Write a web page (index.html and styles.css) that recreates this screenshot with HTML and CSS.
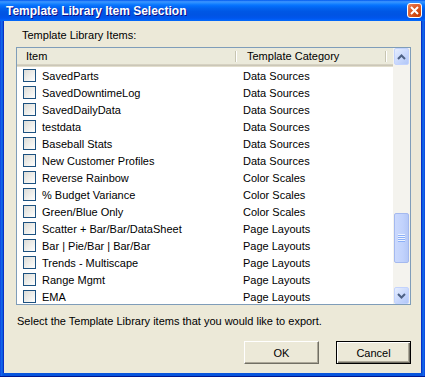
FILE: index.html
```html
<!doctype html>
<html lang="en">
<head>
    <meta charset="utf-8">
    <title>Template Library Item Selection</title>
    <link rel="stylesheet" href="styles.css">
</head>
<body>

    <!--dialog window-->
    <div class="window">
        <div class="titlebar">
            <span class="title">Template Library Item Selection</span>
            <span class="close">
                <svg width="9" height="9" viewBox="0 0 9 9"><path d="M1 1 L8 8 M8 1 L1 8" stroke="#fff" stroke-width="2" fill="none"/></svg>
            </span>
        </div>
        <div class="frame">
            <div class="body">
                <div class="label">Template Library Items:</div>

                <!--list view-->
                <div class="list">
                    <div class="list-main">
                        <div class="header">
                            <div class="col col-item">Item</div>
                            <div class="col col-cat">Template Category</div>
                            <div class="col col-rest"></div>
                        </div>
                        <div class="rows">
                            <div class="row"><span class="check"></span><span class="name">SavedParts</span><span class="cat">Data Sources</span></div>
                            <div class="row"><span class="check"></span><span class="name">SavedDowntimeLog</span><span class="cat">Data Sources</span></div>
                            <div class="row"><span class="check"></span><span class="name">SavedDailyData</span><span class="cat">Data Sources</span></div>
                            <div class="row"><span class="check"></span><span class="name">testdata</span><span class="cat">Data Sources</span></div>
                            <div class="row"><span class="check"></span><span class="name">Baseball Stats</span><span class="cat">Data Sources</span></div>
                            <div class="row"><span class="check"></span><span class="name">New Customer Profiles</span><span class="cat">Data Sources</span></div>
                            <div class="row"><span class="check"></span><span class="name">Reverse Rainbow</span><span class="cat">Color Scales</span></div>
                            <div class="row"><span class="check"></span><span class="name">% Budget Variance</span><span class="cat">Color Scales</span></div>
                            <div class="row"><span class="check"></span><span class="name">Green/Blue Only</span><span class="cat">Color Scales</span></div>
                            <div class="row"><span class="check"></span><span class="name">Scatter + Bar/Bar/DataSheet</span><span class="cat">Page Layouts</span></div>
                            <div class="row"><span class="check"></span><span class="name">Bar | Pie/Bar | Bar/Bar</span><span class="cat">Page Layouts</span></div>
                            <div class="row"><span class="check"></span><span class="name">Trends - Multiscape</span><span class="cat">Page Layouts</span></div>
                            <div class="row"><span class="check"></span><span class="name">Range Mgmt</span><span class="cat">Page Layouts</span></div>
                            <div class="row"><span class="check"></span><span class="name">EMA</span><span class="cat">Page Layouts</span></div>
                        </div>
                    </div>

                    <!--scrollbar-->
                    <div class="scrollbar">
                        <div class="sb-btn">
                            <svg width="9" height="6" viewBox="0 0 9 6"><path d="M1 5 L4.5 1.5 L8 5" stroke="#4d6185" stroke-width="2" fill="none"/></svg>
                        </div>
                        <div class="sb-track">
                            <div class="sb-thumb">
                                <span></span><span></span><span></span><span></span>
                            </div>
                        </div>
                        <div class="sb-btn">
                            <svg width="9" height="6" viewBox="0 0 9 6"><path d="M1 1 L4.5 4.5 L8 1" stroke="#4d6185" stroke-width="2" fill="none"/></svg>
                        </div>
                    </div>
                </div>

                <div class="hint">Select the Template Library items that you would like to export.</div>

                <div class="buttons">
                    <button class="btn">OK</button>
                    <button class="btn btn-cancel">Cancel</button>
                </div>
            </div>
        </div>
    </div>

</body>
</html>
```

FILE: styles.css
```css
* {
    padding: 0;
    margin: 0;
    box-sizing: border-box;
}

body {
    font-family: "Liberation Sans", Arial, sans-serif;
    font-size: 11px;
    color: #000;
    background: #fff;
}

.window {
    width: 425px;
    height: 377px;
    display: flex;
    flex-direction: column;
}

.titlebar {
    height: 21px;
    display: flex;
    align-items: center;
    justify-content: space-between;
    padding: 0 3px 0 6px;
    background: linear-gradient(#0058ee 0%, #3a93ff 8%, #288eff 14%, #127dff 20%, #036ffc 28%, #0262ee 40%, #0057e5 55%, #0054e3 70%, #0055eb 85%, #005bf5 92%, #026afe 96%, #0062ef 100%);
}

.title {
    font-weight: bold;
    font-size: 12px;
    color: #fff;
    text-shadow: 1px 1px #0f1089;
    padding-top: 1px;
}

.close {
    width: 15px;
    height: 15px;
    display: flex;
    align-items: center;
    justify-content: center;
    border: 1px solid #fff;
    border-radius: 3px;
    background: radial-gradient(circle at 80% 80%, #c83c00 0%, #dd5a26 55%, #ea8a66 100%);
}

.frame {
    flex: 1;
    display: flex;
    padding: 0 3px 3px;
    background: linear-gradient(to right, #0831d9 0, #166aee 1px, #0855dd 3px, #0855dd calc(100% - 3px), #166aee calc(100% - 1px), #0831d9 100%);
    border-bottom: 1px solid #001890;
}

.body {
    flex: 1;
    display: flex;
    flex-direction: column;
    background: #ece9d8;
    border-left: 1px solid #0831c6;
    border-right: 1px solid #0831c6;
    padding: 8px 10px 0 12px;
}

.label {
    line-height: 13px;
    padding-left: 6px;
    margin-bottom: 5px;
}

/* list view */
.list {
    height: 258px;
    display: flex;
    border: 1px solid #7f9db9;
    background: #fff;
}

.list-main {
    flex: 1;
    overflow: hidden;
    display: flex;
    flex-direction: column;
}

.header {
    height: 19px;
    flex-shrink: 0;
    display: flex;
    background: #ebeadb;
    box-shadow: inset 0 -1px #e2decd, inset 0 -2px #cbc7b8, inset 0 -3px #d6d2c2;
}

.col {
    position: relative;
    line-height: 16px;
}

.col-item {
    width: 219px;
    padding-left: 9px;
}

.col-cat {
    width: 150px;
    padding-left: 11px;
}

.col-rest {
    flex: 1;
}

.col-item::after,
.col-cat::after {
    content: "";
    position: absolute;
    right: 0;
    top: 3px;
    width: 1px;
    height: 11px;
    background: #c7c5b2;
    box-shadow: 1px 0 #fff;
}

.rows {
    flex: 1;
}

.row {
    height: 17px;
    display: flex;
    align-items: center;
    padding-left: 6px;
    white-space: nowrap;
}

.check {
    width: 13px;
    height: 13px;
    flex-shrink: 0;
    border: 1px solid #1c5180;
    background: linear-gradient(135deg, #dcdcd7 0%, #f4f4f1 70%, #ffffff 100%);
}

.name {
    width: 200px;
    padding-left: 6px;
}

.cat {
    padding-left: 7px;
}

/* scrollbar */
.scrollbar {
    width: 17px;
    display: flex;
    flex-direction: column;
    background: #f4f3ee;
}

.sb-btn {
    height: 17px;
    display: flex;
    align-items: center;
    justify-content: center;
    margin: 0 1px;
    border: 1px solid #c3d3fd;
    border-radius: 2px;
    background: linear-gradient(135deg, #e6eefe 0%, #c6d6fc 60%, #b1c7f8 100%);
}

.sb-track {
    flex: 1;
}

.sb-thumb {
    margin: 148px 1px 0;
    height: 50px;
    display: flex;
    flex-direction: column;
    align-items: center;
    justify-content: center;
    border: 1px solid #a4b9ef;
    border-radius: 2px;
    background: linear-gradient(to right, #cbd9fd 0%, #c1d2fc 60%, #b5c8f7 100%);
}

.sb-thumb span {
    width: 7px;
    height: 2px;
    border-top: 1px solid #eef3fe;
    border-bottom: 1px solid #8cb0f8;
}

.hint {
    line-height: 13px;
    margin-top: 10px;
    padding-left: 1px;
}

.buttons {
    display: flex;
    justify-content: flex-end;
    gap: 17px;
    margin-top: 13px;
}

.btn {
    width: 75px;
    height: 23px;
    font-family: "Liberation Sans", Arial, sans-serif;
    font-size: 11px;
    color: #000;
    background: #ece9d8;
    border: 1px solid;
    border-color: #fff #716f64 #716f64 #fff;
    box-shadow: inset -1px -1px #aca899;
}

.btn-cancel {
    border: 1px solid #000;
    box-shadow: inset 1px 1px #fff, inset -1px -1px #716f64, inset -2px -2px #aca899;
}
```
